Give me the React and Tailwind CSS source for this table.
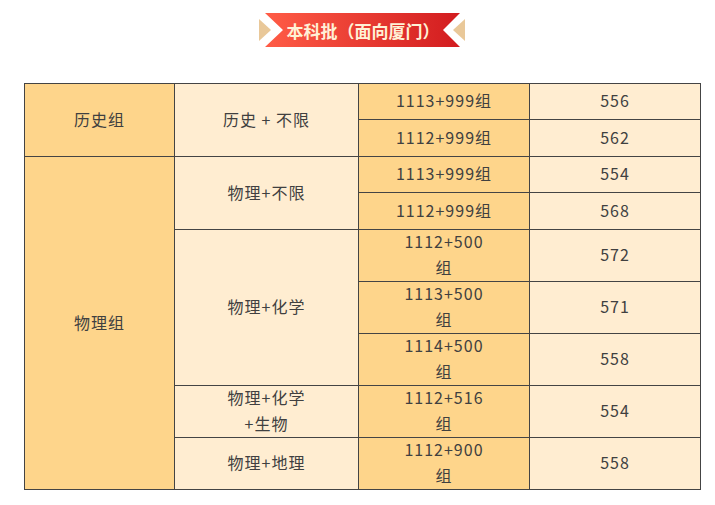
import React from "react";

const font = { fontFamily: '"Noto Sans CJK SC", "Noto Sans", sans-serif' };

const dark = "bg-[#fed58b]";
const light = "bg-[#ffedd1]";

function Cell({ className = "", children }) {
  return (
    <div
      className={`flex flex-col items-center justify-center border-r border-b border-[#444] pb-[3px] text-center text-[16px] leading-[26px] tracking-[1px] text-[#404040] ${className}`}
    >
      {children}
    </div>
  );
}

function Banner() {
  return (
    <div className="flex justify-center pl-[9px]">
      <div className="relative flex h-[34px] w-[210px] items-center justify-center">
        <svg
          className="absolute inset-0"
          width="210"
          height="34"
          viewBox="0 0 210 34"
        >
          <defs>
            <linearGradient id="ribbon" x1="0" y1="0" x2="1" y2="0">
              <stop offset="0" stopColor="#ff5c46" />
              <stop offset="1" stopColor="#d21c1f" />
            </linearGradient>
          </defs>
          <polygon points="8,0 203,0 186,17 203,34 8,34 26,17" fill="url(#ribbon)" />
          <polygon points="2,6 14,17 2,28" fill="#e9c899" />
          <polygon points="208,6 196,17 208,28" fill="#e9c899" />
        </svg>
        <span className="relative pl-[2px] text-[17px] font-bold leading-none text-[#fff1d6]">
          本科批（面向厦门）
        </span>
      </div>
    </div>
  );
}

export default function App() {
  return (
    <div className="min-h-[505px] w-[715px] bg-white pt-[13px]" style={font}>
      <Banner />
      <div className="mt-[36px] pl-[24px]">
        <div className="grid w-[677px] grid-cols-[150px_184px_171px_171px] grid-rows-[36px_37px_36px_37px_52px_52px_52px_52px_52px] border-l border-t border-[#444]">
          <Cell className={`${dark} row-span-2`}>历史组</Cell>
          <Cell className={`${light} row-span-2`}>历史 + 不限</Cell>
          <Cell className={dark}>1113+999组</Cell>
          <Cell className={light}>556</Cell>
          <Cell className={dark}>1112+999组</Cell>
          <Cell className={light}>562</Cell>

          <Cell className={`${dark} row-span-7`}>物理组</Cell>
          <Cell className={`${light} row-span-2`}>物理+不限</Cell>
          <Cell className={dark}>1113+999组</Cell>
          <Cell className={light}>554</Cell>
          <Cell className={dark}>1112+999组</Cell>
          <Cell className={light}>568</Cell>

          <Cell className={`${light} row-span-3`}>物理+化学</Cell>
          <Cell className={dark}>
            <span>1112+500</span>
            <span>组</span>
          </Cell>
          <Cell className={light}>572</Cell>
          <Cell className={dark}>
            <span>1113+500</span>
            <span>组</span>
          </Cell>
          <Cell className={light}>571</Cell>
          <Cell className={dark}>
            <span>1114+500</span>
            <span>组</span>
          </Cell>
          <Cell className={light}>558</Cell>

          <Cell className={light}>
            <span>物理+化学</span>
            <span>+生物</span>
          </Cell>
          <Cell className={dark}>
            <span>1112+516</span>
            <span>组</span>
          </Cell>
          <Cell className={light}>554</Cell>

          <Cell className={light}>物理+地理</Cell>
          <Cell className={dark}>
            <span>1112+900</span>
            <span>组</span>
          </Cell>
          <Cell className={light}>558</Cell>
        </div>
      </div>
    </div>
  );
}
